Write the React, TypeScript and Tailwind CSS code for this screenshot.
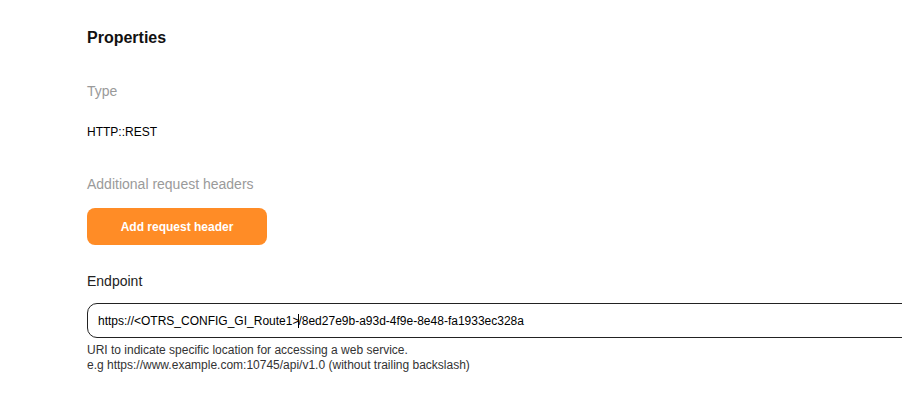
import React from 'react';

const App: React.FC = () => {
  return (
    <div className="w-[902px] h-[400px] overflow-hidden bg-white font-['Liberation_Sans',Arial,sans-serif]">
      <div className="pl-[87px] pt-[28px]">
        <h2 className="text-[16px] leading-[20px] font-bold text-[#111]">Properties</h2>

        <div className="mt-[34px] text-[14px] leading-[18px] text-[#9a9a9a]">Type</div>
        <div className="mt-[24px] text-[12px] leading-[16px] text-black">HTTP::REST</div>

        <div className="mt-[35px] text-[14px] leading-[18px] text-[#9a9a9a]">Additional request headers</div>
        <button
          type="button"
          className="mt-[15px] w-[180px] h-[37px] rounded-[8px] bg-[#ff8c26] text-white text-[12px] font-bold"
        >
          Add request header
        </button>

        <div className="mt-[27px] text-[14px] leading-[18px] text-[#222]">Endpoint</div>
        <div className="mt-[13px] w-[860px] h-[35px] rounded-[10px] border border-[#222] flex items-center px-[10px]">
          <span className="text-[12px] text-black whitespace-nowrap">
            https://&lt;OTRS_CONFIG_GI_Route1&gt;
            <span className="inline-block w-px h-[14px] bg-black align-middle -mx-px"></span>
            /8ed27e9b-a93d-4f9e-8e48-fa1933ec328a
          </span>
        </div>
        <div className="mt-[5px] text-[12px] leading-[15px] text-[#333]">
          <div>URI to indicate specific location for accessing a web service.</div>
          <div>e.g https://www.example.com:10745/api/v1.0 (without trailing backslash)</div>
        </div>
      </div>
    </div>
  );
};

export default App;
